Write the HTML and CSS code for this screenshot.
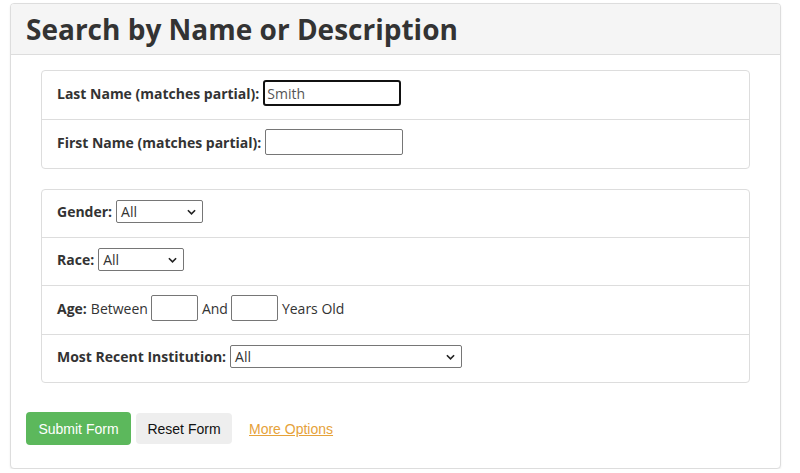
FILE: index.html
```html
<!DOCTYPE html>
<html lang="en">
<head>
<meta charset="utf-8">
<title>Search by Name or Description</title>
<link rel="stylesheet" href="styles.css">
</head>
<body>
<div class="page">
  <form class="panel">
    <div class="panel-heading">
      <h1>Search by Name or Description</h1>
    </div>
    <div class="panel-body">
      <div class="list-group names">
        <div class="row">
          <label class="lbl" for="last">Last Name (matches partial):</label>
          <input id="last" class="text focused" type="text" value="Smith">
        </div>
        <div class="row">
          <label class="lbl" for="first">First Name (matches partial):</label>
          <input id="first" class="text" type="text">
        </div>
      </div>
      <div class="list-group filters">
        <div class="row">
          <label class="lbl" for="gender">Gender:</label>
          <div class="select sel-gender" id="gender"><span>All</span><svg viewBox="0 0 10 6" class="chev"><path d="M1 1l4 4 4-4" /></svg></div>
        </div>
        <div class="row">
          <label class="lbl" for="race">Race:</label>
          <div class="select sel-race" id="race"><span>All</span><svg viewBox="0 0 10 6" class="chev"><path d="M1 1l4 4 4-4" /></svg></div>
        </div>
        <div class="row row-age">
          <span class="lbl">Age:</span><span class="plain">Between</span>
          <input class="text age" type="text"><span class="plain">And</span>
          <input class="text age" type="text"><span class="plain">Years Old</span>
        </div>
        <div class="row">
          <label class="lbl" for="inst">Most Recent Institution:</label>
          <div class="select sel-inst" id="inst"><span>All</span><svg viewBox="0 0 10 6" class="chev"><path d="M1 1l4 4 4-4" /></svg></div>
        </div>
      </div>
      <div class="actions">
        <button type="button" class="btn btn-success">Submit Form</button>
        <button type="button" class="btn btn-default">Reset Form</button>
        <a class="more" href="#">More Options</a>
      </div>
    </div>
  </form>
</div>
</body>
</html>
```
FILE: styles.css
```css
html, body {
  margin: 0;
  padding: 0;
  background: #fff;
}

.page {
  padding: 3px 19px 0 10px;
  font-family: "Open Sans", "Liberation Sans", sans-serif;
  color: #333;
}

.panel {
  border: 1px solid #ddd;
  border-radius: 4px;
  box-shadow: 0 1px 2px rgba(0, 0, 0, 0.08);
  background: #fff;
}

.panel-heading {
  background: #f5f5f5;
  border-bottom: 1px solid #ddd;
  border-radius: 3px 3px 0 0;
  height: 50px;
  padding: 0 15px;
  display: flex;
  align-items: center;
}

.panel-heading h1 {
  margin: 0;
  font-size: 28px;
  font-weight: 700;
  color: #333;
  letter-spacing: 0;
}

.panel-body {
  padding: 15px 15px 23px;
}

.list-group {
  margin: 0 15px 20px;
  border: 1px solid #ddd;
  border-radius: 4px;
}

/* rows sit a touch above centre, hence the extra bottom padding */
.row {
  height: 43px;
  padding: 0 15px 4px;
  display: flex;
  align-items: center;
  font-size: 14px;
  border-top: 1px solid #ddd;
}

.names .row,
.row-age {
  height: 44px;
}

.row:first-child {
  border-top: 0;
}

.lbl {
  font-weight: 700;
  margin-right: 4px;
}

.plain {
  color: #333;
  margin-right: 3px;
}

.text {
  box-sizing: border-box;
  width: 138px;
  height: 26px;
  border: 1px solid #767676;
  border-radius: 2px;
  padding: 0 3px;
  font-family: "Open Sans", "Liberation Sans", sans-serif;
  font-size: 14px;
  color: #555;
  background: #fff;
  margin: 0;
}

.text.focused {
  border: 2px solid #111;
  border-radius: 3px;
  padding: 0 2px;
  outline: none;
}

.age {
  width: 47px;
  margin-right: 4px;
}

.select {
  box-sizing: border-box;
  height: 23px;
  border: 1px solid #767676;
  border-radius: 2px;
  display: flex;
  align-items: center;
  justify-content: space-between;
  padding: 0 6px 0 4px;
  font-size: 14px;
  color: #333;
  background: #fff;
}

.sel-gender { width: 87px; }
.sel-race { width: 86px; }
.sel-inst { width: 232px; }

.chev {
  width: 9px;
  height: 6px;
  fill: none;
  stroke: #222;
  stroke-width: 1.8;
}

.actions {
  display: flex;
  align-items: center;
  padding-top: 9px;
}

.btn {
  font-family: "Liberation Sans", Arial, sans-serif;
  font-size: 14px;
  white-space: nowrap;
  border: 0;
  border-radius: 4px;
  height: 33px;
  padding: 0;
  margin: 0 5px 0 0;
  cursor: pointer;
}

.btn-success {
  background: #5cb85c;
  color: #fff;
  width: 105px;
}

.btn-default {
  background: #eeeeee;
  color: #111;
  height: 31px;
  width: 96px;
}

.more {
  font-family: "Liberation Sans", Arial, sans-serif;
  font-size: 14px;
  color: #e6a23a;
  text-decoration: underline;
  margin-left: 12px;
}
```
